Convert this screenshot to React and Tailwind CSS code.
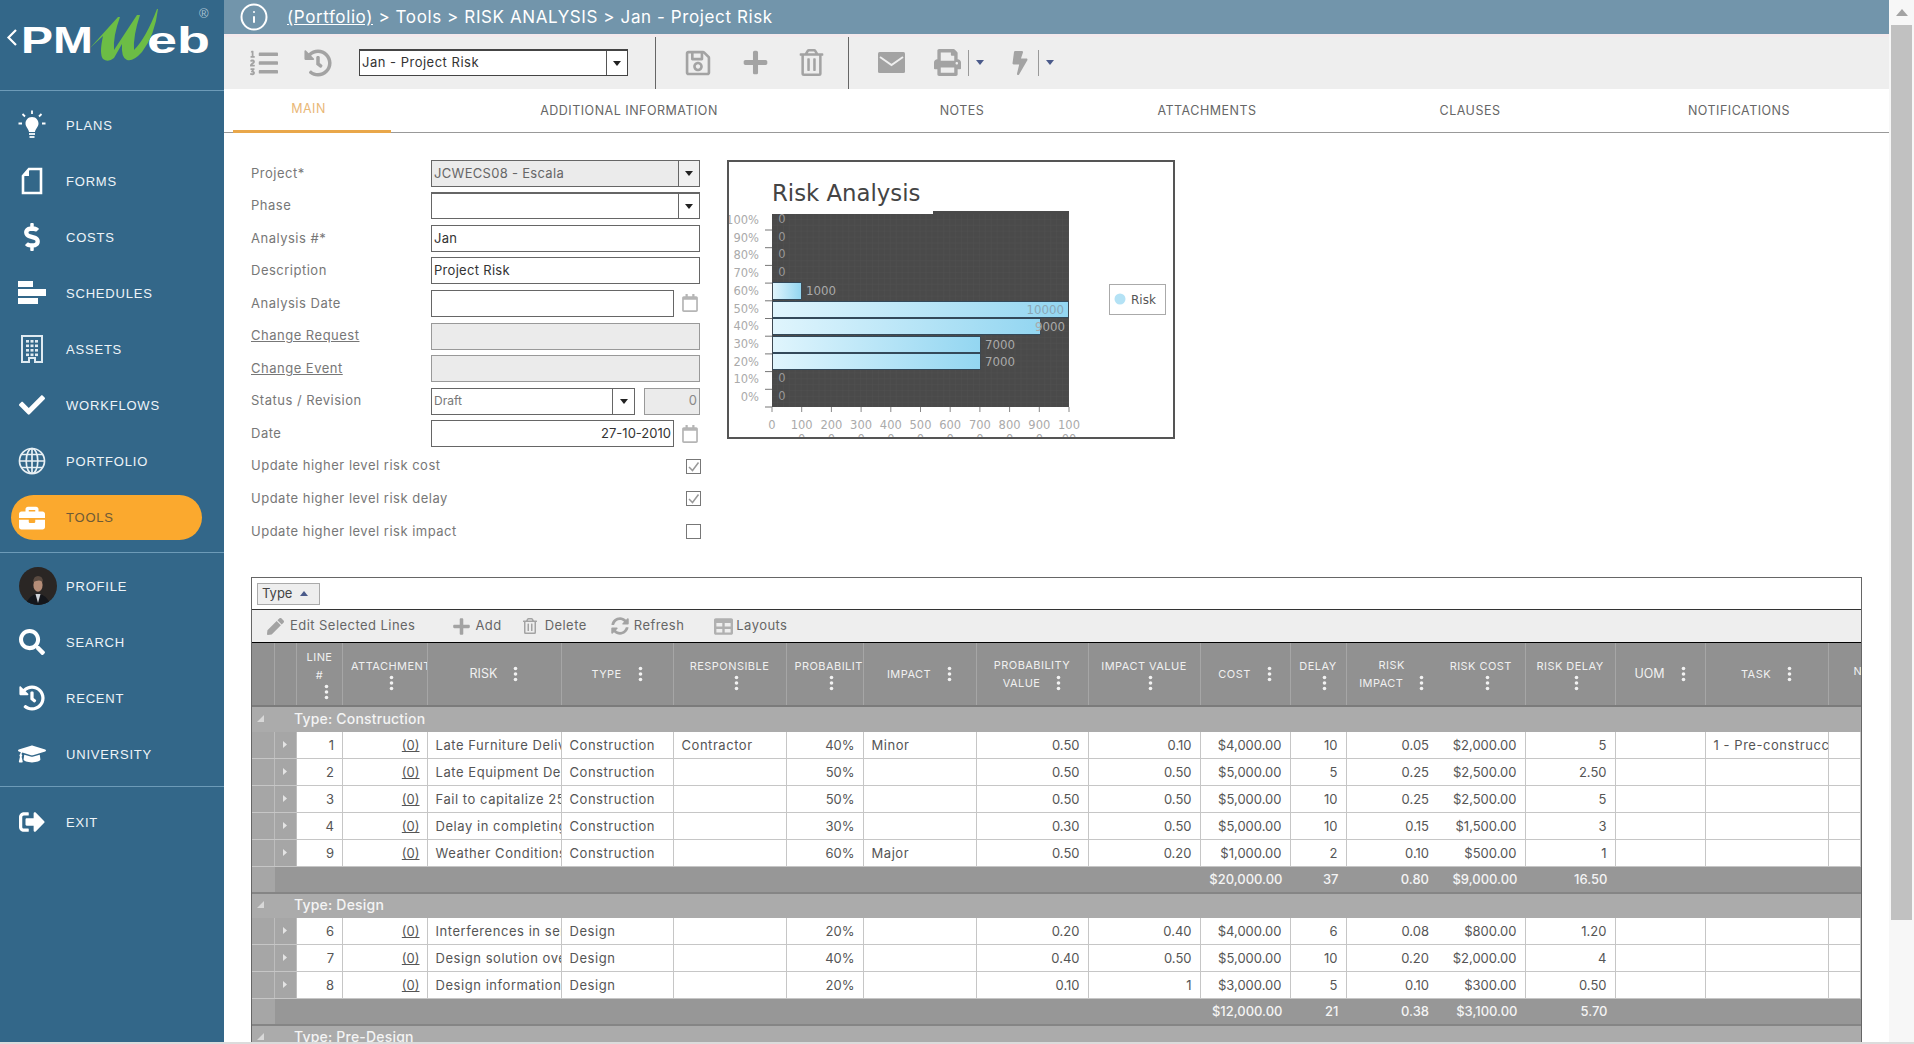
import {
  FaDollarSign, FaCheck, FaBriefcase, FaSearch, FaHistory,
  FaGraduationCap, FaSignOutAlt, FaListOl, FaRegSave, FaPlus, FaRegTrashAlt, FaPrint, FaBolt,
  FaPen, FaSyncAlt, FaTable, FaRegCalendar,
} from "react-icons/fa";
import { Info } from "lucide-react";

function Logo() {
  return (
    <svg width="224" height="70" viewBox="0 0 224 70" className="block">
      <path d="M16 30 L8.5 37.5 L16 45" fill="none" stroke="#fff" strokeWidth="2.2" />
      <text x="21" y="53" fill="#fff" fontFamily="Liberation Sans" fontWeight="700" fontSize="37" textLength="72" lengthAdjust="spacingAndGlyphs">PM</text>
      <text x="147" y="53" fill="#fff" fontFamily="Liberation Sans" fontWeight="700" fontSize="37" textLength="63" lengthAdjust="spacingAndGlyphs">eb</text>
      <path d="M90 48 L118 17 L120 17 Q113 36 114 50 L137 15 L140 15 Q133 36 134 50 Q146 38 157 9 L158 9 Q155 35 142 52 Q133 62 127 60 Q121 58 122 44 L114 58 Q108 63 103 59 Q99 54 103 36 Z" fill="#6cbd45" />
      <text x="199" y="18" fill="#a9c2d2" fontFamily="Liberation Sans" fontSize="13">®</text>
    </svg>
  );
}

function BulbIcon() {
  return (
    <svg width="28" height="30" viewBox="0 0 28 30">
      <path d="M14 7 C9.5 7 7.5 10.5 7.5 13.5 C7.5 17 10.5 18.5 11 22 H17 C17.5 18.5 20.5 17 20.5 13.5 C20.5 10.5 18.5 7 14 7 Z" fill="#fff" />
      <rect x="11" y="23" width="6" height="2" fill="#e4ecf1" />
      <rect x="11.5" y="26" width="5" height="2" fill="#e4ecf1" />
      <path d="M14 0.5 V4 M4.5 4 L7 6.5 M23.5 4 L21 6.5 M0.5 13.5 H4 M24 13.5 H27.5" stroke="#fff" strokeWidth="1.8" fill="none" />
    </svg>
  );
}

function FormsIcon() {
  return (
    <svg width="22" height="28" viewBox="0 0 22 28">
      <path d="M8 2 H20 V26 H2 V9 Z" fill="none" stroke="#fff" strokeWidth="2.6" />
      <path d="M8 2 V9 H2" fill="#fff" />
    </svg>
  );
}

function SchedulesIcon() {
  return (
    <svg width="28" height="24" viewBox="0 0 28 24">
      <rect x="0" y="0" width="15" height="6" fill="#fff" />
      <rect x="0" y="8" width="28" height="7" fill="#fff" />
      <rect x="0" y="17" width="20" height="6" fill="#fff" />
    </svg>
  );
}

function AssetsIcon() {
  return (
    <svg width="22" height="28" viewBox="0 0 22 28">
      <path d="M1 1 H21 V27 H14 V23 H8 V27 H1 Z" fill="none" stroke="#dfeaf1" strokeWidth="2" />
      {[5, 9.5, 14, 18.5].map((y) =>
        [5, 9.5, 14].map((x) => <rect key={`${x}-${y}`} x={x} y={y} width="3" height="2.6" fill="#dfeaf1" />)
      )}
    </svg>
  );
}

function GlobeIcon() {
  return (
    <svg width="28" height="28" viewBox="0 0 28 28" fill="none" stroke="#e8f0f4" strokeWidth="1.7">
      <circle cx="14" cy="14" r="12.5" />
      <ellipse cx="14" cy="14" rx="5.8" ry="12.5" />
      <path d="M14 1.5 V26.5 M1.5 14 H26.5 M3.5 7.5 H24.5 M3.5 20.5 H24.5" />
    </svg>
  );
}

function Avatar() {
  return (
    <svg width="38" height="38" viewBox="0 0 38 38" className="rounded-full">
      <rect width="38" height="38" fill="#2a2624" />
      <path d="M7 38 Q9 28 19 27 Q29 28 31 38 Z" fill="#14161b" />
      <path d="M16.5 27 L19 36 L21.5 27 Z" fill="#cfd2d8" />
      <ellipse cx="19" cy="18" rx="4.6" ry="6.8" fill="#b58d78" />
      <path d="M14 15 Q14.5 9 19 9 Q24 9 24 15 Q21 12 14 15 Z" fill="#5a4a40" />
    </svg>
  );
}

const navTop = [
  ["PLANS", <BulbIcon />],
  ["FORMS", <FormsIcon />],
  ["COSTS", <FaDollarSign size={28} color="#fff" />],
  ["SCHEDULES", <SchedulesIcon />],
  ["ASSETS", <AssetsIcon />],
  ["WORKFLOWS", <FaCheck size={26} color="#fff" />],
  ["PORTFOLIO", <GlobeIcon />],
];

const navMid = [
  ["PROFILE", <div className="ml-[12px] shrink-0"><Avatar /></div>],
  ["SEARCH", <FaSearch size={26} color="#fff" />],
  ["RECENT", <FaHistory size={26} color="#fff" />],
  ["UNIVERSITY", <FaGraduationCap size={28} color="#fff" />],
];

function NavItem({ label, icon }) {
  return (
    <div className="flex h-[56px] items-center pl-[11px]">
      <div className="flex w-[42px] justify-center">{icon}</div>
      <span className="ml-[13px] pt-[1px] text-[13px] tracking-[0.8px] text-[#eef4f8]">{label}</span>
    </div>
  );
}

function Sidebar() {
  return (
    <aside className="flex w-[224px] shrink-0 flex-col bg-[#336789] font-['Liberation_Sans',sans-serif]">
      <div className="h-[91px] border-b border-[#6d9bb8]">
        <Logo />
      </div>
      <div className="border-b border-[#6d9bb8] pb-[12px] pt-[6px]">
        {navTop.map(([label, icon]) => (
          <NavItem key={label} label={label} icon={icon} />
        ))}
        <div className="ml-[11px] mt-[6px] flex h-[45px] w-[191px] items-center rounded-full bg-[#fba92e]">
          <div className="flex w-[42px] justify-center">
            <FaBriefcase size={26} color="#fff" />
          </div>
          <span className="ml-[13px] text-[13px] tracking-[0.8px] text-[#6e5a36]">TOOLS</span>
        </div>
      </div>
      <div className="border-b border-[#6d9bb8] pb-[4px] pt-[5px]">
        {navMid.map(([label, icon]) => (
          <NavItem key={label} label={label} icon={icon} />
        ))}
      </div>
      <div className="pt-[7px]">
        <NavItem label="EXIT" icon={<FaSignOutAlt size={26} color="#fff" />} />
      </div>
    </aside>
  );
}

function Caret({ up, color = "#222" }) {
  return (
    <svg width="8" height="5" viewBox="0 0 8 5" className="block">
      <path d={up ? "M0 5 L4 0 L8 5 Z" : "M0 0 H8 L4 5 Z"} fill={color} />
    </svg>
  );
}

function MailIcon() {
  return (
    <svg width="27" height="21" viewBox="0 0 27 21">
      <rect width="27" height="21" rx="1.5" fill="#a3a3a3" />
      <path d="M2 5 L13.5 13 L25 5" fill="none" stroke="#efefef" strokeWidth="2" />
    </svg>
  );
}

function Toolbar() {
  return (
    <div className="flex h-[55px] shrink-0 items-stretch border-t-[3px] border-[#f3e9ec] bg-[#eeeeee]">
      <div className="flex w-[431px] items-center pb-[1px] pl-[26px]">
        <FaListOl size={28} color="#a3a3a3" />
        <FaHistory size={28} color="#a3a3a3" className="ml-[26px]" />
        <div className="ml-[27px] flex h-[27px] w-[269px] items-center border border-[#444] border-t-2 bg-white text-[13px] tracking-[0.5px] text-[#333]">
          <span className="flex-1 pl-[2px]">Jan - Project Risk</span>
          <span className="flex h-full w-[21px] items-center justify-center border-l border-[#555]">
            <Caret />
          </span>
        </div>
      </div>
      <div className="flex w-[193px] items-center border-l border-[#666] pb-[1px] pl-[28px]">
        <FaRegSave size={28} color="#a3a3a3" />
        <FaPlus size={27} color="#a3a3a3" className="ml-[30px]" />
        <FaRegTrashAlt size={27} color="#a3a3a3" className="ml-[29px]" />
      </div>
      <div className="flex flex-1 items-center border-l border-[#666] pb-[1px] pl-[29px]">
        <MailIcon />
        <FaPrint size={27} color="#a3a3a3" className="ml-[29px]" />
        <span className="ml-[7px] h-[26px] border-l border-[#999]" />
        <span className="ml-[7px]"><Caret color="#4a5a8a" /></span>
        <FaBolt size={24} color="#a3a3a3" className="ml-[24px]" />
        <span className="ml-[6px] h-[26px] border-l border-[#999]" />
        <span className="ml-[7px]"><Caret color="#4a5a8a" /></span>
      </div>
    </div>
  );
}

const tabs = [
  ["ADDITIONAL INFORMATION", "w-[476px]"],
  ["NOTES", "w-[190px]"],
  ["ATTACHMENTS", "w-[300px]"],
  ["CLAUSES", "w-[226px]"],
  ["NOTIFICATIONS", "w-[312px]"],
];

function Tabs() {
  return (
    <div className="flex h-[44px] shrink-0 items-stretch border-b border-[#999] pl-[9px] text-[12.5px] tracking-[0.5px] text-[#666]">
      <div className="-mb-px flex w-[158px] shrink-0 items-center justify-center border-b-[3px] border-[#e9a74a] pr-[7px] text-[#e9b877]">MAIN</div>
      {tabs.map(([label, width]) => (
        <div key={label} className={`flex shrink-0 items-center justify-center pt-[1px] ${width}`}>{label}</div>
      ))}
    </div>
  );
}

function Select({ value, disabled, thick }) {
  return (
    <div className={`flex h-[27px] w-[269px] items-center border border-[#666] text-[13px] tracking-[0.3px] ${disabled ? "bg-[#ebebeb] text-[#666]" : "bg-white"} ${thick ? "border-t-2" : ""}`}>
      <span className="flex-1 pl-[2px]">{value}</span>
      <span className={`flex h-full w-[21px] items-center justify-center border-l border-[#666] ${disabled ? "bg-[#f0f0f0]" : ""}`}>
        <Caret />
      </span>
    </div>
  );
}

function Field({ label, link, children }) {
  return (
    <div className="flex h-[32.55px] items-center">
      <div className={`w-[180px] shrink-0 whitespace-nowrap text-[13px] tracking-[0.5px] text-[#777] ${link ? "underline" : ""}`}>{label}</div>
      {children}
    </div>
  );
}

function TextBox({ value, cls = "w-[269px] bg-white", right }) {
  return (
    <div className={`flex h-[27px] items-center border border-[#666] px-[2px] text-[13px] text-[#333] ${right ? "justify-end" : "tracking-[0.3px]"} ${cls}`}>{value}</div>
  );
}

function Calendar() {
  return <FaRegCalendar size={18} color="#b5b5b5" className="ml-[7px]" />;
}

function Check({ on }) {
  return (
    <div className="ml-[255px] flex h-[15px] w-[15px] items-center justify-center border border-[#777]">
      {on && (
        <svg width="13" height="13" viewBox="0 0 13 13">
          <path d="M2 7 L5.5 10.5 L11.5 2.5" fill="none" stroke="#999" strokeWidth="1.5" />
        </svg>
      )}
    </div>
  );
}

function Form() {
  return (
    <div className="w-[476px] shrink-0 text-[#555]">
      <Field label="Project*"><Select value="JCWECS08 - Escala" disabled /></Field>
      <Field label="Phase"><Select thick /></Field>
      <Field label="Analysis #*"><TextBox value="Jan" /></Field>
      <Field label="Description"><TextBox value="Project Risk" /></Field>
      <Field label="Analysis Date"><TextBox cls="w-[243px] bg-white" /><Calendar /></Field>
      <Field label="Change Request" link><TextBox cls="w-[269px] border-[#999] bg-[#ebebeb]" /></Field>
      <Field label="Change Event" link><TextBox cls="w-[269px] border-[#999] bg-[#ebebeb]" /></Field>
      <Field label="Status / Revision">
        <div className="flex h-[27px] w-[204px] items-center border border-[#666] text-[12px] text-[#777]">
          <span className="flex-1 pl-[2px]">Draft</span>
          <span className="flex h-full w-[22px] items-center justify-center border-l border-[#666]"><Caret /></span>
        </div>
        <TextBox value="0" right cls="ml-[9px] w-[56px] border-[#999] bg-[#ebebeb] text-[#888]" />
      </Field>
      <Field label="Date"><TextBox value="27-10-2010" right cls="w-[243px] bg-white" /><Calendar /></Field>
      <Field label="Update higher level risk cost"><Check on /></Field>
      <Field label="Update higher level risk delay"><Check on /></Field>
      <Field label="Update higher level risk impact"><Check /></Field>
    </div>
  );
}

const yLabels = ["100%", "90%", "80%", "70%", "60%", "50%", "40%", "30%", "20%", "10%", "0%"];
const bars = [
  { y: 123, h: 16, w: 28, label: "1000", x: 79, anchor: "start" },
  { y: 142, h: 15, w: 295, label: "10000", x: 337, anchor: "end" },
  { y: 159, h: 15, w: 267, label: "9000", x: 338, anchor: "end" },
  { y: 177, h: 15, w: 207, label: "7000", x: 258, anchor: "start" },
  { y: 194, h: 15, w: 207, label: "7000", x: 258, anchor: "start" },
];
const zeroRows = [0, 1, 2, 3, 9, 10];

function Chart() {
  const font = "DejaVu Sans";
  return (
    <div className="mt-[3px] h-[279px] w-[448px] shrink-0 overflow-hidden border-2 border-[#555] bg-white">
      <svg width="444" height="275" viewBox="2 2 444 275" className="block">
        <defs>
          <linearGradient id="bar" x1="0" x2="1" y1="0" y2="0">
            <stop offset="0" stopColor="#e0f5fd" />
            <stop offset="1" stopColor="#93d6f1" />
          </linearGradient>
          <pattern id="grid" width="5.94" height="5.9" patternUnits="userSpaceOnUse" x="45" y="54">
            <path d="M5.94 0 V5.9 M0 5.9 H5.94" stroke="#575757" strokeWidth="0.5" fill="none" />
          </pattern>
        </defs>
        <text x="45" y="41" fontFamily={font} fontSize="22.8" fill="#444">Risk Analysis</text>
        <rect x="45" y="54" width="297" height="193" fill="#4a4a4a" />
        <rect x="206" y="51" width="136" height="4" fill="#4a4a4a" />
        <rect x="45" y="54" width="297" height="193" fill="url(#grid)" />
        {yLabels.map((label, i) => (
          <g key={label}>
            <text x="32" y={64 + i * 17.7} textAnchor="end" fontFamily={font} fontSize="11.5" fill="#aaa">{label}</text>
            <line x1="38" x2="45" y1={70 + i * 17.7} y2={70 + i * 17.7} stroke="#777" />
          </g>
        ))}
        {zeroRows.map((i) => (
          <text key={i} x="55" y={63 + i * 17.7} textAnchor="middle" fontFamily={font} fontSize="11.5" fill="#999">0</text>
        ))}
        {bars.map((b, i) => (
          <g key={i}>
            <rect x="45.5" y={b.y - 1} width={b.w + 1} height={b.h + 2} fill="#33495a" />
            <rect x="46" y={b.y} width={b.w} height={b.h} fill="url(#bar)" />
            <text x={b.x} y={b.y + 12} textAnchor={b.anchor} fontFamily={font} fontSize="11.8" fill={i === 1 ? "#8aa7b5" : "#aaa"}>{b.label}</text>
          </g>
        ))}
        {[...Array(11).keys()].map((i) => (
          <g key={i}>
            <line x1={45 + i * 29.7} x2={45 + i * 29.7} y1="247" y2="252" stroke="#888" />
            <text x={45 + i * 29.7} y="269" textAnchor="middle" fontFamily={font} fontSize="11.5" fill="#aaa">
              {i === 0 ? "0" : i === 10 ? "100" : `${i}00`}
            </text>
            {i > 0 && (
              <text x={45 + i * 29.7} y="283" textAnchor="middle" fontFamily={font} fontSize="11.5" fill="#aaa">{i === 10 ? "00" : "0"}</text>
            )}
          </g>
        ))}
        <rect x="382.5" y="124.5" width="56" height="30" fill="#fff" stroke="#aaa" />
        <circle cx="393" cy="139" r="5.5" fill="#b4e2f5" />
        <text x="404" y="143.5" fontFamily={font} fontSize="12" fill="#555">Risk</text>
      </svg>
    </div>
  );
}

const columns = "grid-cols-[23px_22px_46px_84.5px_134px_112px_113px_77px_113px_112px_112px_90px_56px_90.5px_88.5px_90px_90px_123px_1fr]";

function Kebab({ cls = "" }) {
  return (
    <svg width="5" height="16" viewBox="0 0 5 16" className={`shrink-0 ${cls}`}>
      <circle cx="2.5" cy="2.5" r="1.8" fill="#f2f2f2" />
      <circle cx="2.5" cy="8" r="1.8" fill="#f2f2f2" />
      <circle cx="2.5" cy="13.5" r="1.8" fill="#f2f2f2" />
    </svg>
  );
}

// inline: kebab sits beside the (last) label line, otherwise it goes underneath
const headers = [
  { lines: ["LINE", "#"] },
  { lines: ["ATTACHMENTS"], clip: true },
  { lines: ["RISK"], inline: true, big: true },
  { lines: ["TYPE"], inline: true },
  { lines: ["RESPONSIBLE"] },
  { lines: ["PROBABILITY"], clip: true },
  { lines: ["IMPACT"], inline: true },
  { lines: ["PROBABILITY", "VALUE"], inline: true },
  { lines: ["IMPACT VALUE"] },
  { lines: ["COST"], inline: true },
  { lines: ["DELAY"] },
  { lines: ["RISK", "IMPACT"], inline: true, noBorder: true },
  { lines: ["RISK COST"] },
  { lines: ["RISK DELAY"] },
  { lines: ["UOM"], inline: true, big: true },
  { lines: ["TASK"], inline: true },
];

function HeaderCell({ lines, inline, clip, big, noBorder }) {
  const last = lines[lines.length - 1];
  const first = lines.slice(0, -1);
  return (
    <div className={`flex flex-col items-center justify-center overflow-hidden whitespace-nowrap text-[#f0f0f0] ${big ? "text-[12.5px]" : "text-[11px] tracking-[0.45px]"} ${noBorder ? "" : "border-r border-[#a6a6a6]"}`}>
      {first.map((line) => (
        <div key={line} className="leading-[18px]">{line}</div>
      ))}
      {inline ? (
        <div className="flex items-center gap-[16px] leading-[18px]">
          {last}
          <Kebab />
        </div>
      ) : (
        <>
          <div className={`leading-[18px] ${clip ? "w-full pl-[8px]" : ""}`}>{last}</div>
          <Kebab cls="ml-[13px]" />
        </>
      )}
    </div>
  );
}

function GridHeader() {
  return (
    <div className={`grid h-[64px] ${columns} border-b-2 border-[#7b7b7b] bg-[#919191]`}>
      <div className="border-r border-[#a6a6a6]" />
      <div className="border-r border-[#a6a6a6]" />
      {headers.map((h) => (
        <HeaderCell key={h.lines.join(" ")} {...h} />
      ))}
      <div className="overflow-hidden pl-[25px] pt-[20px] text-[11px] text-[#f0f0f0]">NOTES</div>
    </div>
  );
}

function GroupRow({ label, cls }) {
  return (
    <div className={`flex items-center bg-[#ababab] pb-[2px] ${cls}`}>
      <svg width="7" height="7" viewBox="0 0 7 7" className="ml-[5px]">
        <path d="M7 0 V7 H0 Z" fill="#d8d8d8" />
      </svg>
      <span className="ml-[30px] text-[14px] font-medium tracking-[0.2px] text-[#f4f4f4]">{label}</span>
    </div>
  );
}

const aligns = ["r", "ru", "l", "l", "l", "r", "l", "r", "r", "r", "r", "r", "r", "r", "l", "l", "l"];

function DataRow({ values }) {
  return (
    <div className={`grid h-[26.95px] ${columns} border-b border-[#c6c6c6] bg-white text-[13px] text-[#555]`}>
      <div className="border-r border-[#bdbdbd] bg-[#a6a6a6]" />
      <div className="flex items-center border-r border-[#bdbdbd] bg-[#a6a6a6] pl-[8px]">
        <svg width="4" height="7" viewBox="0 0 4 7"><path d="M0 0 L4 3.5 L0 7 Z" fill="#e4e4e4" /></svg>
      </div>
      {aligns.map((a, i) => {
        const border = i === 11 ? "" : "border-r border-[#c6c6c6]";
        if (a === "l") {
          return <div key={i} className={`flex items-center overflow-hidden whitespace-nowrap pl-[8px] pt-[2px] tracking-[0.55px] ${border}`}>{values[i]}</div>;
        }
        return (
          <div key={i} className={`flex items-center justify-end overflow-hidden whitespace-nowrap pt-[2px] ${border} ${a === "ru" ? "pr-[7px] underline" : "pr-[8px]"}`}>{values[i]}</div>
        );
      })}
    </div>
  );
}

function FooterRow({ cost, delay, impact, riskCost, riskDelay }) {
  const cell = "flex items-center justify-end pr-[8px] pt-[1px]";
  return (
    <div className={`grid h-[27px] ${columns} border-b-2 border-[#858585] bg-[#979797] text-[13px] font-medium text-[#f4f4f4]`}>
      <div className="bg-[#a6a6a6]" />
      <div className={`col-start-12 ${cell}`}>{cost}</div>
      <div className={cell}>{delay}</div>
      <div className={cell}>{impact}</div>
      <div className={cell}>{riskCost}</div>
      <div className={cell}>{riskDelay}</div>
    </div>
  );
}

const construction = [
  ["1", "(0)", "Late Furniture Delivery", "Construction", "Contractor", "40%", "Minor", "0.50", "0.10", "$4,000.00", "10", "0.05", "$2,000.00", "5", "", "1 - Pre-construccion", ""],
  ["2", "(0)", "Late Equipment Delivery", "Construction", "", "50%", "", "0.50", "0.50", "$5,000.00", "5", "0.25", "$2,500.00", "2.50", "", "", ""],
  ["3", "(0)", "Fail to capitalize 25% of", "Construction", "", "50%", "", "0.50", "0.50", "$5,000.00", "10", "0.25", "$2,500.00", "5", "", "", ""],
  ["4", "(0)", "Delay in completing works", "Construction", "", "30%", "", "0.30", "0.50", "$5,000.00", "10", "0.15", "$1,500.00", "3", "", "", ""],
  ["9", "(0)", "Weather Conditions", "Construction", "", "60%", "Major", "0.50", "0.20", "$1,000.00", "2", "0.10", "$500.00", "1", "", "", ""],
];

const design = [
  ["6", "(0)", "Interferences in services", "Design", "", "20%", "", "0.20", "0.40", "$4,000.00", "6", "0.08", "$800.00", "1.20", "", "", ""],
  ["7", "(0)", "Design solution overrun", "Design", "", "40%", "", "0.40", "0.50", "$5,000.00", "10", "0.20", "$2,000.00", "4", "", "", ""],
  ["8", "(0)", "Design information", "Design", "", "20%", "", "0.10", "1", "$3,000.00", "5", "0.10", "$300.00", "0.50", "", "", ""],
];

function ToolBtn({ icon, label, cls }) {
  return (
    <div className={`flex items-center ${cls}`}>
      {icon}
      <span>{label}</span>
    </div>
  );
}

function DataGrid() {
  return (
    <div className="ml-[27px] w-[1611px] border border-[#666] border-b-0">
      <div className="flex h-[32px] items-center border-b border-[#333] pl-[5px]">
        <div className="flex h-[22px] w-[63px] items-center gap-[8px] border border-[#aaa] bg-[#eeeeee] pl-[4px] text-[13px] text-[#444]">
          Type <Caret up color="#4a5a8a" />
        </div>
      </div>
      <div className="flex h-[33px] items-center border-b border-black bg-[#eeeeee] pl-[15px] text-[13px] tracking-[0.45px] text-[#666]">
        <ToolBtn icon={<FaPen size={17} color="#a3a3a3" />} label="Edit Selected Lines" cls="gap-[6px]" />
        <ToolBtn icon={<FaPlus size={19} color="#a3a3a3" />} label="Add" cls="ml-[37px] gap-[4px]" />
        <ToolBtn icon={<FaRegTrashAlt size={16} color="#a3a3a3" />} label="Delete" cls="ml-[20px] gap-[7px]" />
        <ToolBtn icon={<FaSyncAlt size={18} color="#a3a3a3" />} label="Refresh" cls="ml-[24px] gap-[5px]" />
        <ToolBtn icon={<FaTable size={19} color="#b0b0b0" />} label="Layouts" cls="ml-[30px] gap-[3px]" />
      </div>
      <GridHeader />
      <GroupRow label="Type: Construction" cls="h-[25px]" />
      {construction.map((row) => (
        <DataRow key={row[0]} values={row} />
      ))}
      <FooterRow cost="$20,000.00" delay="37" impact="0.80" riskCost="$9,000.00" riskDelay="16.50" />
      <GroupRow label="Type: Design" cls="h-[24px]" />
      {design.map((row) => (
        <DataRow key={row[0]} values={row} />
      ))}
      <FooterRow cost="$12,000.00" delay="21" impact="0.38" riskCost="$3,100.00" riskDelay="5.70" />
      <GroupRow label="Type: Pre-Design" cls="h-[24px]" />
    </div>
  );
}

function Scrollbar() {
  return (
    <div className="flex w-[25px] shrink-0 flex-col items-center bg-[#f7f7f7] pl-[2px] pr-[2px]">
      <div className="flex h-[25px] items-center justify-center">
        <svg width="12" height="7" viewBox="0 0 12 7"><path d="M0 7 L6 0 L12 7 Z" fill="#a3a3a3" /></svg>
      </div>
      <div className="h-[895px] w-full bg-[#c1c1c1]" />
    </div>
  );
}

export default function App() {
  return (
    <div className="flex h-[1044px] w-[1914px] flex-col overflow-hidden bg-white font-[Inter,sans-serif]">
      <div className="flex h-[1042px]">
        <Sidebar />
        <main className="flex w-[1665px] shrink-0 flex-col overflow-hidden">
          <div className="flex h-[34px] shrink-0 items-center bg-[#7295ab] pl-[15px] text-[17px] tracking-[0.6px] text-white">
            <Info size={30} strokeWidth={1.6} color="#fff" />
            <span className="ml-[18px] pt-[1px]"><span className="underline">(Portfolio)</span> &gt; Tools &gt; RISK ANALYSIS &gt; Jan - Project Risk</span>
          </div>
          <Toolbar />
          <Tabs />
          <div className="flex h-[444px] shrink-0 pl-[27px] pt-[24px]">
            <Form />
            <Chart />
          </div>
          <DataGrid />
        </main>
        <Scrollbar />
      </div>
      <div className="h-[2px] bg-[#dcdcdc]" />
    </div>
  );
}
